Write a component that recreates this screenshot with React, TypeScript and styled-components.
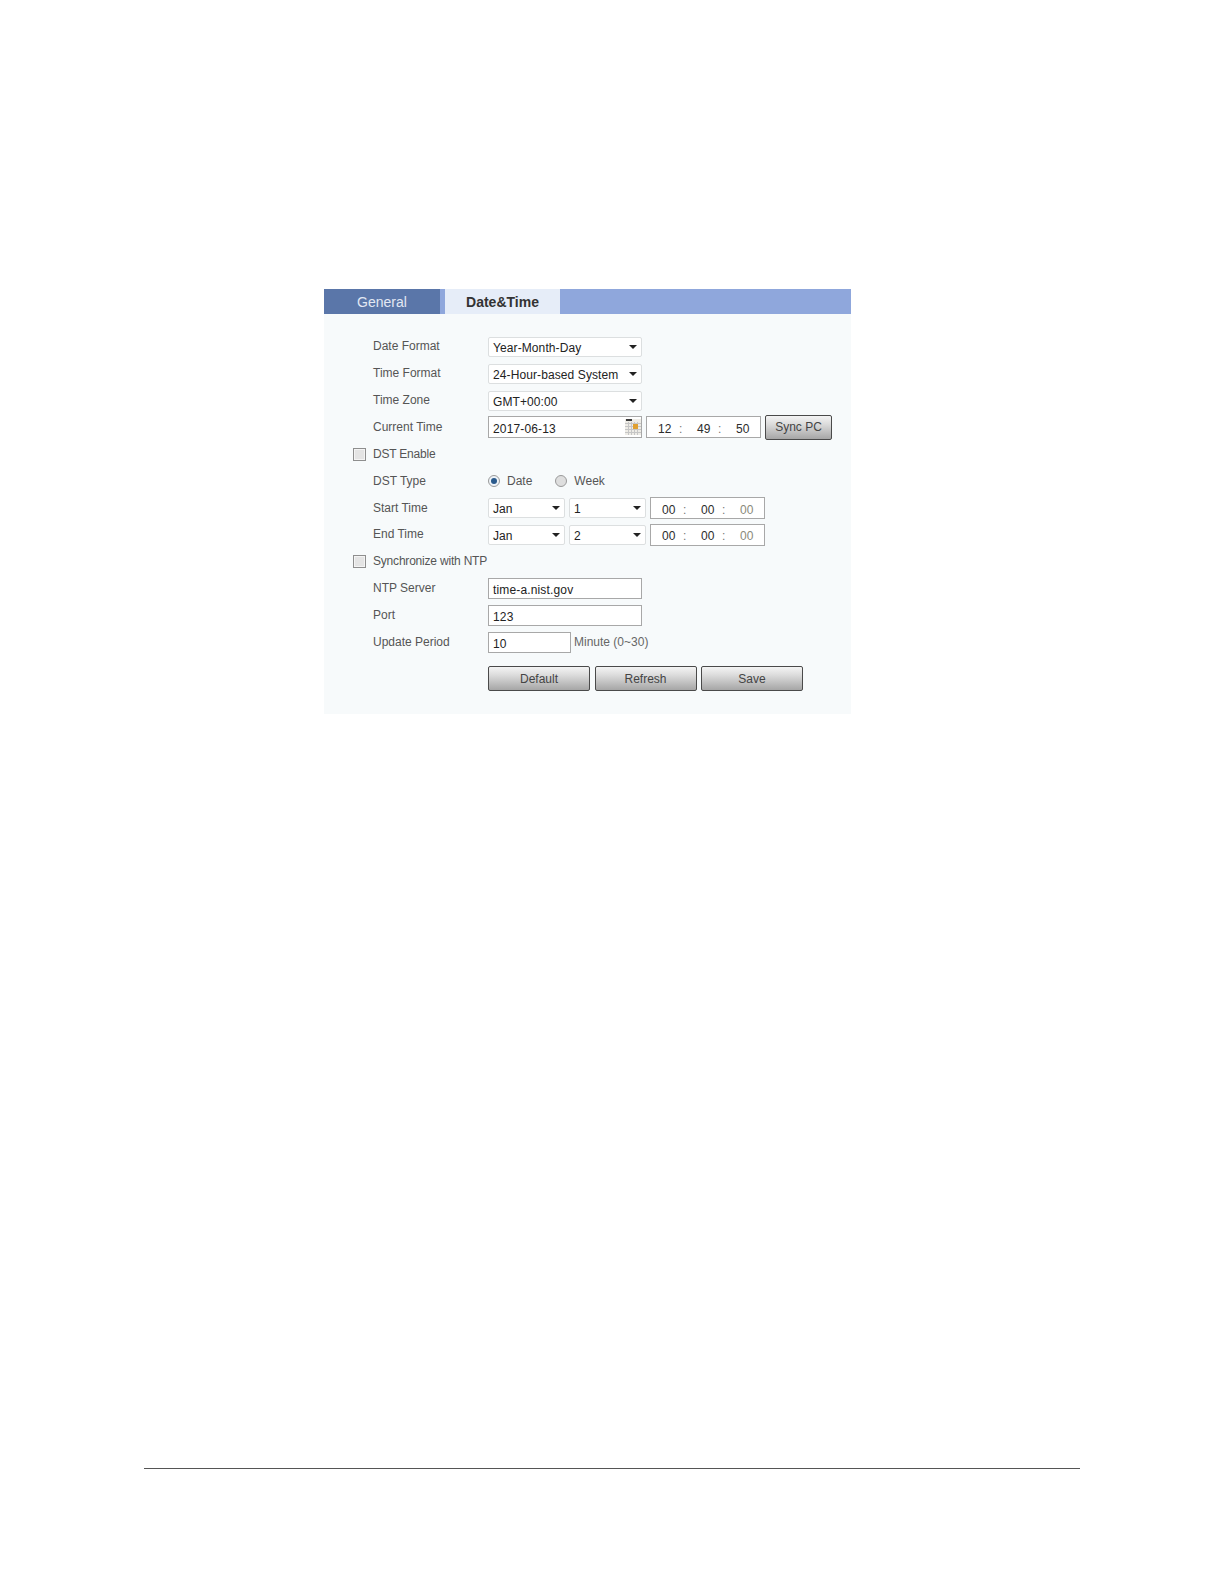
import React from "react";
import styled, { createGlobalStyle } from "styled-components";

const GlobalStyle = createGlobalStyle`
  html, body {
    margin: 0;
    padding: 0;
    background: #fff;
    font-family: "Liberation Sans", Arial, sans-serif;
  }
`;

const Page = styled.div`
  width: 1224px;
  height: 1584px;
  padding-top: 289px;
  box-sizing: border-box;
`;

const Panel = styled.div`
  width: 527px;
  height: 425px;
  margin-left: 324px;
  background: #f7fafb;
`;

const TabBar = styled.div`
  display: flex;
  height: 25px;
  background: #8fa7dc;
`;

const Tab = styled.div<{ $active?: boolean }>`
  display: flex;
  align-items: center;
  justify-content: center;
  width: ${(p) => (p.$active ? "115px" : "116px")};
  margin-left: ${(p) => (p.$active ? "5px" : "0")};
  font-size: 14px;
  font-weight: ${(p) => (p.$active ? 700 : 400)};
  color: ${(p) => (p.$active ? "#333" : "#e2e8f3")};
  background: ${(p) => (p.$active ? "#e6edf8" : "#5a76a9")};
`;

const Form = styled.div`
  padding-top: 19.5px;
`;

const Row = styled.div<{ $check?: boolean }>`
  display: flex;
  align-items: center;
  height: 26.8px;
  padding-left: ${(p) => (p.$check ? "29px" : "49px")};
`;

const Label = styled.div<{ $low?: boolean }>`
  width: 115px;
  padding-bottom: ${(p) => (p.$low ? "0" : "2px")};
  font-size: 12px;
  color: #555;
  white-space: nowrap;
`;

const Box = styled.span`
  width: 13px;
  height: 13px;
  margin-right: 7px;
  box-sizing: border-box;
  border: 1px solid #8e8e8e;
  background: #e4e4e4;
  box-shadow: inset 0 0 0 1px #f4f4f4;
`;

const CheckLabel = styled.span`
  padding-bottom: 1px;
  font-size: 12px;
  letter-spacing: -0.2px;
  color: #555;
  white-space: nowrap;
`;

const Controls = styled.div<{ $flush?: boolean }>`
  display: flex;
  align-items: center;
  gap: 4px;
  ${(p) => (p.$flush ? "&& > * { margin-top: 0; }" : "")}
`;

const Select = styled.div<{ $width: number }>`
  display: flex;
  align-items: center;
  justify-content: space-between;
  width: ${(p) => p.$width}px;
  height: 20px;
  margin-top: 1px;
  padding: 2px 4px 0 4px;
  box-sizing: border-box;
  border: 1px solid #dcdfe0;
  border-radius: 2px;
  background: #fff;
  font-size: 12px;
  letter-spacing: 0.1px;
  color: #222;
  white-space: nowrap;
`;

const Arrow = styled.span`
  width: 0;
  height: 0;
  margin-top: -2px;
  border-left: 4px solid transparent;
  border-right: 4px solid transparent;
  border-top: 4px solid #222;
`;

const Field = styled.div<{ $width: number; $height?: number }>`
  display: flex;
  align-items: center;
  justify-content: space-between;
  width: ${(p) => p.$width}px;
  height: ${(p) => p.$height ?? 21}px;
  margin-top: 1px;
  padding: 3px 0 0 4px;
  box-sizing: border-box;
  border: 1px solid #a8a8a8;
  background: #fff;
  font-size: 12px;
  letter-spacing: 0.15px;
  color: #222;

  svg {
    margin-top: -3px;
  }
`;

const TimeField = styled.div`
  display: flex;
  align-items: center;
  width: 115px;
  height: 22px;
  margin-top: 1px;
  padding: 3px 0 0 11px;
  box-sizing: border-box;
  border: 1px solid #a8a8a8;
  background: #fff;
  font-size: 12px;
`;

const TimePart = styled.span<{ $muted?: boolean }>`
  width: 13px;
  color: ${(p) => (p.$muted ? "#8a8a7a" : "#2c2c2c")};
`;

const TimeColon = styled.span`
  width: 3px;
  margin: 0 15px 0 8px;
  color: #777;
`;

const Button = styled.div<{ $width: number }>`
  display: flex;
  align-items: center;
  justify-content: center;
  width: ${(p) => p.$width}px;
  height: 25px;
  box-sizing: border-box;
  border: 1px solid #4a4a4a;
  border-radius: 2px;
  background: linear-gradient(#f4f4f4, #dcdcdc 35%, #a6a6a6);
  font-size: 12px;
  color: #444;
`;

const RadioDot = styled.span<{ $checked?: boolean }>`
  display: flex;
  align-items: center;
  justify-content: center;
  width: 12px;
  height: 12px;
  box-sizing: border-box;
  border: 1px solid #9a9a9a;
  border-radius: 50%;
  background: ${(p) => (p.$checked ? "#eef3f8" : "#dedede")};

  &::after {
    content: "";
    display: ${(p) => (p.$checked ? "block" : "none")};
    width: 6px;
    height: 6px;
    border-radius: 50%;
    background: #2a5a8c;
  }
`;

const RadioText = styled.span<{ $gap: number }>`
  margin: 0 ${(p) => p.$gap}px 0 7px;
  font-size: 12px;
  color: #555;
`;

const Hint = styled.span`
  margin-left: -1px;
  font-size: 12px;
  color: #666;
  white-space: nowrap;
`;

const ButtonRow = styled.div`
  display: flex;
  gap: 4.5px;
  margin: 11px 0 0 164px;
`;

const FooterRule = styled.div`
  width: 936px;
  height: 1px;
  margin: 754px 0 0 144px;
  background: #555;
`;

const CalendarIcon = () => (
  <svg width="16" height="16" viewBox="0 0 16 16">
    <rect x="0" y="0" width="16" height="16" fill="#eeece6" />
    <path d="M0 4.5H16M0 7.5H16M0 10.5H16M0 13.5H16M3.5 3V16M6.5 3V16M9.5 3V16M12.5 3V16" stroke="#c6c6c6" />
    <rect x="1" y="0" width="6" height="2" fill="#3c3c3c" />
    <rect x="8" y="5" width="5" height="5" fill="#e0a030" />
  </svg>
);

function Time({ values, muted }: { values: string[]; muted?: boolean }) {
  return (
    <TimeField>
      <TimePart>{values[0]}</TimePart>
      <TimeColon>:</TimeColon>
      <TimePart>{values[1]}</TimePart>
      <TimeColon>:</TimeColon>
      <TimePart $muted={muted}>{values[2]}</TimePart>
    </TimeField>
  );
}

function Dropdown({ width, children }: { width: number; children: React.ReactNode }) {
  return (
    <Select $width={width}>
      <span>{children}</span>
      <Arrow />
    </Select>
  );
}

export default function App() {
  return (
    <>
      <GlobalStyle />
      <Page>
        <Panel>
          <TabBar>
            <Tab>General</Tab>
            <Tab $active>Date&amp;Time</Tab>
          </TabBar>
          <Form>
            <Row>
              <Label>Date Format</Label>
              <Dropdown width={154}>Year-Month-Day</Dropdown>
            </Row>
            <Row>
              <Label>Time Format</Label>
              <Dropdown width={154}>24-Hour-based System</Dropdown>
            </Row>
            <Row>
              <Label $low>Time Zone</Label>
              <Dropdown width={154}>GMT+00:00</Dropdown>
            </Row>
            <Row>
              <Label $low>Current Time</Label>
              <Controls $flush>
                <Field $width={154} $height={22}>
                  2017-06-13
                  <CalendarIcon />
                </Field>
                <Time values={["12", "49", "50"]} />
                <Button $width={67}>Sync PC</Button>
              </Controls>
            </Row>
            <Row $check>
              <Box />
              <CheckLabel>DST Enable</CheckLabel>
            </Row>
            <Row>
              <Label $low>DST Type</Label>
              <RadioDot $checked />
              <RadioText $gap={23}>Date</RadioText>
              <RadioDot />
              <RadioText $gap={0}>Week</RadioText>
            </Row>
            <Row>
              <Label $low>Start Time</Label>
              <Controls>
                <Dropdown width={77}>Jan</Dropdown>
                <Dropdown width={77}>1</Dropdown>
                <Time values={["00", "00", "00"]} muted />
              </Controls>
            </Row>
            <Row>
              <Label $low>End Time</Label>
              <Controls>
                <Dropdown width={77}>Jan</Dropdown>
                <Dropdown width={77}>2</Dropdown>
                <Time values={["00", "00", "00"]} muted />
              </Controls>
            </Row>
            <Row $check>
              <Box />
              <CheckLabel>Synchronize with NTP</CheckLabel>
            </Row>
            <Row>
              <Label $low>NTP Server</Label>
              <Field $width={154}>time-a.nist.gov</Field>
            </Row>
            <Row>
              <Label $low>Port</Label>
              <Field $width={154}>123</Field>
            </Row>
            <Row>
              <Label $low>Update Period</Label>
              <Controls>
                <Field $width={83}>10</Field>
                <Hint>Minute (0~30)</Hint>
              </Controls>
            </Row>
            <ButtonRow>
              <Button $width={102}>Default</Button>
              <Button $width={102}>Refresh</Button>
              <Button $width={102}>Save</Button>
            </ButtonRow>
          </Form>
        </Panel>
        <FooterRule />
      </Page>
    </>
  );
}
